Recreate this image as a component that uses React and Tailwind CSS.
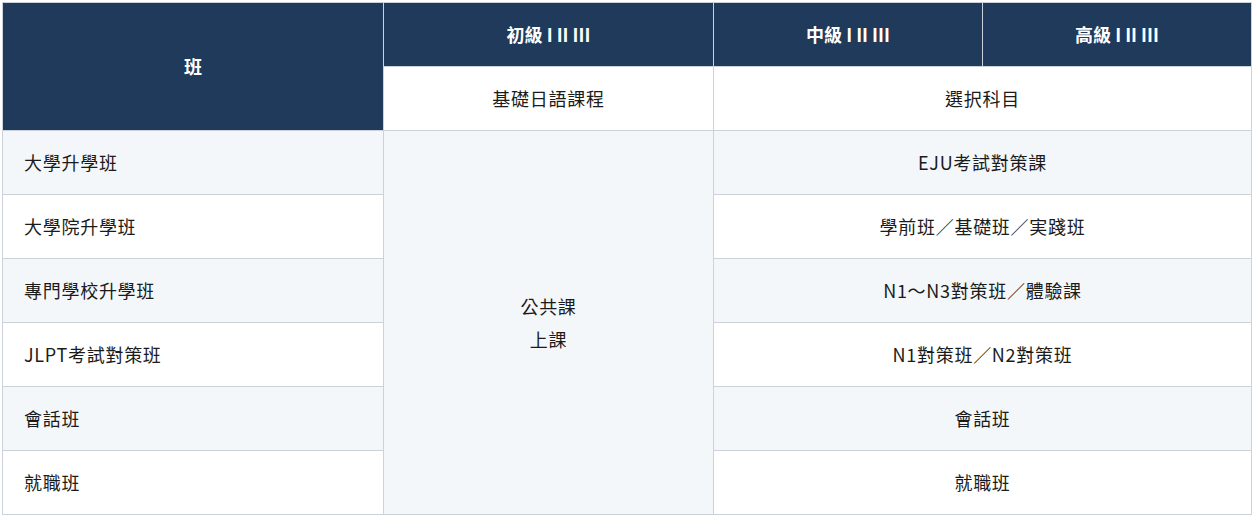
import React from 'react';

const rows = [
  { name: '大學升學班', course: 'EJU考試對策課' },
  { name: '大學院升學班', course: '學前班／基礎班／実踐班' },
  { name: '專門學校升學班', course: 'N1〜N3對策班／體驗課' },
  { name: 'JLPT考試對策班', course: 'N1對策班／N2對策班' },
  { name: '會話班', course: '會話班' },
  { name: '就職班', course: '就職班' },
];

const rowStart = ['row-start-3', 'row-start-4', 'row-start-5', 'row-start-6', 'row-start-7', 'row-start-8'];

const head = 'bg-[#1f3a5a] text-white font-bold tracking-normal flex items-center justify-center';

const App = () => {
  return (
    <div className="min-h-screen bg-white pt-[2px] pl-[2px] font-['Noto_Sans_CJK_TC','Noto_Sans',sans-serif] text-[18px] text-[#1b1b1b] tracking-[0.04em]">
      <div className="grid w-[1250px] grid-cols-[380px_329px_268px_268px] grid-rows-[repeat(8,63px)] gap-px border border-[#ccd2db] bg-[#ccd2db]">
        {/* header */}
        <div className={`${head} row-span-2 col-start-1 row-start-1`}>班</div>
        <div className={`${head} col-start-2 row-start-1`}>初級 I II III</div>
        <div className={`${head} col-start-3 row-start-1`}>中級 I II III</div>
        <div className={`${head} col-start-4 row-start-1`}>高級 I II III</div>
        <div className="col-start-2 row-start-2 bg-white flex items-center justify-center">基礎日語課程</div>
        <div className="col-start-3 col-span-2 row-start-2 bg-white flex items-center justify-center">選択科目</div>

        {/* shared course cell */}
        <div className="col-start-2 row-start-3 row-span-6 bg-[#f4f7fa] flex flex-col items-center justify-center leading-[33px]">
          <span>公共課</span>
          <span>上課</span>
        </div>

        {rows.map((r, i) => {
          const bg = i % 2 === 0 ? 'bg-[#f4f7fa]' : 'bg-white';
          return (
            <React.Fragment key={r.name}>
              <div className={`col-start-1 ${rowStart[i]} ${bg} flex items-center pl-[21px]`}>{r.name}</div>
              <div className={`col-start-3 col-span-2 ${rowStart[i]} ${bg} flex items-center justify-center`}>{r.course}</div>
            </React.Fragment>
          );
        })}
      </div>
    </div>
  );
};

export default App;
